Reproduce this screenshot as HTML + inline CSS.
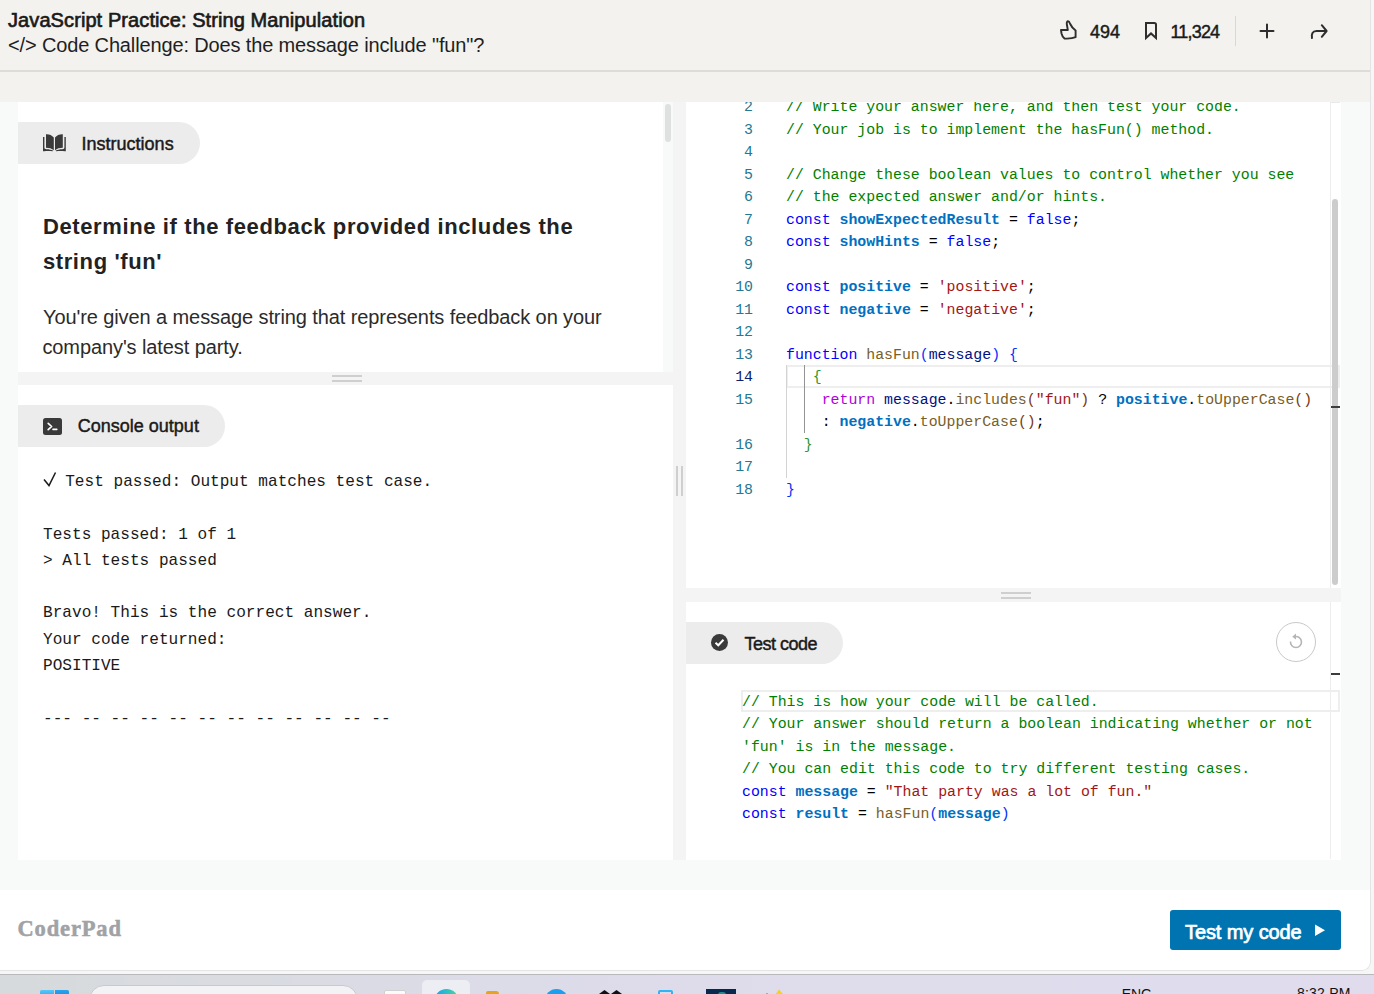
<!DOCTYPE html>
<html><head><meta charset="utf-8">
<style>
*{margin:0;padding:0;box-sizing:border-box}
html,body{width:1374px;height:994px;overflow:hidden;background:#f6f6f6;font-family:"Liberation Sans",sans-serif;color:#1a1a1a}
.a{position:absolute}
.t{position:absolute;white-space:pre;line-height:1}
.cm{color:#008000}.kw{color:#0000ff}.vr{color:#0070c1;font-weight:bold}.st{color:#a31515}.fn{color:#795e26}
.b1{color:#0431fa}.b2{color:#319331}.b3{color:#7b3814}.rt{color:#af00db}.pm{color:#001080}.op{color:#000}
</style></head><body>
<div class="a" style="left:0;top:0;width:1371px;height:971px;background:#f8f9f9;border-bottom-right-radius:9px;overflow:hidden">
<div class="a" style="left:0;top:0;width:1370px;height:102px;background:#f3f2ef"></div>
<div class="a" style="left:0;top:70px;width:1370px;height:2px;background:#dddcd8"></div>
<div class="t" style="left:8.00px;top:10.07px;font-size:20px;font-weight:normal;color:#1a1a1a;letter-spacing:0.09px;font-family:'Liberation Sans',sans-serif;-webkit-text-stroke:0.65px #1a1a1a;">JavaScript Practice: String Manipulation</div>
<div class="t" style="left:8.00px;top:34.87px;font-size:20px;font-weight:normal;color:#1f1f1f;letter-spacing:-0.14px;font-family:'Liberation Sans',sans-serif;">&lt;/&gt; Code Challenge: Does the message include "fun"?</div>
<svg class="a" style="left:1055px;top:16px" width="28" height="28" viewBox="0 0 28 28"><path d="M12.8 14 L11.8 8 C11.5 6 12.3 5.3 13 5.3 C14 5.3 14.5 6.2 15.2 8 C16.4 10.6 18.5 13 20.6 14.6 L20.6 21.2 C18 22.4 15 22.6 12 22.6 L9.6 22.6 C8 21.6 7 19.6 6.5 17.5 L6 14 Z" fill="none" stroke="#2e2e2e" stroke-width="1.9" stroke-linejoin="round"/></svg>
<div class="t" style="left:1090.00px;top:22.56px;font-size:18px;font-weight:normal;color:#1a1a1a;letter-spacing:0px;font-family:'Liberation Sans',sans-serif;-webkit-text-stroke:0.45px #1a1a1a;">494</div>
<svg class="a" style="left:1143px;top:21px" width="16" height="20" viewBox="0 0 16 20"><path d="M3 17 L3 2 L11.3 2 Q13 2 13 3.7 L13 17 L8 12.4 Z" fill="none" stroke="#2e2e2e" stroke-width="2" stroke-linejoin="miter" stroke-miterlimit="3"/></svg>
<div class="t" style="left:1170.40px;top:22.76px;font-size:18px;font-weight:normal;color:#1a1a1a;letter-spacing:-0.8px;font-family:'Liberation Sans',sans-serif;-webkit-text-stroke:0.45px #1a1a1a;">11,324</div>
<div class="a" style="left:1235px;top:16px;width:1px;height:30px;background:#d9d8d5"></div>
<svg class="a" style="left:1252px;top:16px" width="30" height="30" viewBox="0 0 30 30"><path d="M8.5 15 L21.5 15 M15 8.5 L15 21.5" stroke="#2e2e2e" stroke-width="2" stroke-linecap="round"/></svg>
<svg class="a" style="left:1300px;top:16px" width="36" height="30" viewBox="0 0 36 30"><path d="M12 22 C11.3 18 12.5 15 16.5 15 L26 15" fill="none" stroke="#2e2e2e" stroke-width="2" stroke-linecap="round"/><path d="M21.8 9.2 L26.6 15 L21.8 20.8" fill="none" stroke="#2e2e2e" stroke-width="2" stroke-linecap="round" stroke-linejoin="round"/></svg>
<div class="a" style="left:18px;top:102px;width:655px;height:758px;background:#fff"></div>
<div class="a" style="left:663px;top:102px;width:10px;height:270px;background:#f8f9f9"></div>
<div class="a" style="left:665px;top:104px;width:6px;height:38px;background:#dfe0e0;border-radius:3px"></div>
<div class="a" style="left:18px;top:122px;width:182px;height:42px;background:#ececec;border-radius:0 21px 21px 0"></div>
<svg class="a" style="left:38px;top:128px" width="34" height="28" viewBox="0 0 34 28"><g id="bk"><path d="M8 6.2 C11 6 14 7 15.8 9.6 L15.8 22.3 C14 20.6 11 19.8 8 19.8 Z" fill="#3a3a3a"/><path d="M5 9 L6.4 9 L6.4 19.6 C6.4 20.8 7 21.3 8.5 21.3 C11 21.3 13.5 21.8 15.2 22.8 L14.6 23.3 C11.5 22.7 8.5 22.8 6 23.3 L5 23.3 Z" fill="#3a3a3a"/></g><use href="#bk" transform="translate(32.8,0) scale(-1,1)"/></svg>
<div class="t" style="left:81.60px;top:134.76px;font-size:18px;font-weight:normal;color:#1a1a1a;letter-spacing:0px;font-family:'Liberation Sans',sans-serif;-webkit-text-stroke:0.45px #1a1a1a;">Instructions</div>
<div class="t" style="left:42.90px;top:215.88px;font-size:22px;font-weight:bold;color:#222222;letter-spacing:0.62px;font-family:'Liberation Sans',sans-serif;">Determine if the feedback provided includes the</div>
<div class="t" style="left:42.90px;top:250.88px;font-size:22px;font-weight:bold;color:#222222;letter-spacing:0.62px;font-family:'Liberation Sans',sans-serif;">string 'fun'</div>
<div class="t" style="left:43.00px;top:306.77px;font-size:20px;font-weight:normal;color:#2b2b2b;letter-spacing:-0.095px;font-family:'Liberation Sans',sans-serif;">You're given a message string that represents feedback on your</div>
<div class="t" style="left:42.40px;top:336.57px;font-size:20px;font-weight:normal;color:#2b2b2b;letter-spacing:-0.095px;font-family:'Liberation Sans',sans-serif;">company's latest party.</div>
<div class="a" style="left:18px;top:372px;width:655px;height:13px;background:#f4f4f4"></div>
<div class="a" style="left:332px;top:375px;width:30px;height:2px;background:#cfcfcf"></div>
<div class="a" style="left:332px;top:380px;width:30px;height:2px;background:#cfcfcf"></div>
<div class="a" style="left:18px;top:405px;width:207px;height:42px;background:#ececec;border-radius:0 21px 21px 0"></div>
<svg class="a" style="left:43px;top:418px" width="19" height="17" viewBox="0 0 19 17"><rect x="0" y="0" width="19" height="17" rx="2.5" fill="#3a3a3a"/><path d="M5.2 5.3 L8.6 8.5 L5.2 11.7" fill="none" stroke="#fff" stroke-width="1.7" stroke-linecap="round" stroke-linejoin="round"/><path d="M10 11.4 L13.8 11.4" stroke="#fff" stroke-width="1.6" stroke-linecap="round"/></svg>
<div class="t" style="left:77.80px;top:417.46px;font-size:18px;font-weight:normal;color:#1a1a1a;letter-spacing:0px;font-family:'Liberation Sans',sans-serif;-webkit-text-stroke:0.45px #1a1a1a;">Console output</div>
<svg class="a" style="left:42px;top:470px" width="16" height="18" viewBox="0 0 16 18"><path d="M2 9.5 L7 15.6 L13.5 2.5" fill="none" stroke="#1a1a1a" stroke-width="1.5"/></svg>
<div class="t" style="left:65.20px;top:473.86px;font-size:16.1px;font-weight:normal;color:#1a1a1a;letter-spacing:0px;font-family:'Liberation Mono',monospace;">Test passed: Output matches test case.</div>
<div class="t" style="left:43.00px;top:526.76px;font-size:16.1px;font-weight:normal;color:#1a1a1a;letter-spacing:0px;font-family:'Liberation Mono',monospace;">Tests passed: 1 of 1</div>
<div class="t" style="left:43.00px;top:553.16px;font-size:16.1px;font-weight:normal;color:#1a1a1a;letter-spacing:0px;font-family:'Liberation Mono',monospace;">&gt; All tests passed</div>
<div class="t" style="left:43.00px;top:604.96px;font-size:16.1px;font-weight:normal;color:#1a1a1a;letter-spacing:0px;font-family:'Liberation Mono',monospace;">Bravo! This is the correct answer.</div>
<div class="t" style="left:43.00px;top:631.86px;font-size:16.1px;font-weight:normal;color:#1a1a1a;letter-spacing:0px;font-family:'Liberation Mono',monospace;">Your code returned:</div>
<div class="t" style="left:43.00px;top:658.16px;font-size:16.1px;font-weight:normal;color:#1a1a1a;letter-spacing:0px;font-family:'Liberation Mono',monospace;">POSITIVE</div>
<div class="t" style="left:43.00px;top:710.66px;font-size:16.1px;font-weight:normal;color:#1a1a1a;letter-spacing:0px;font-family:'Liberation Mono',monospace;">--- -- -- -- -- -- -- -- -- -- -- --</div>
<div class="a" style="left:673px;top:102px;width:13px;height:758px;background:#f4f4f4"></div>
<div class="a" style="left:676px;top:466px;width:2px;height:30px;background:#cfcfcf"></div>
<div class="a" style="left:681px;top:466px;width:2px;height:30px;background:#cfcfcf"></div>
<div class="a" style="left:686px;top:102px;width:655px;height:758px;background:#fff"></div>
<div class="a" style="left:1330px;top:102px;width:1px;height:486px;background:#ededed"></div>
<div class="a" style="left:1330px;top:602px;width:1px;height:257px;background:#ededed"></div>
<div class="a" style="left:686px;top:102px;width:655px;height:486px;overflow:hidden">
<div class="a" style="left:100px;top:263px;width:554px;height:23px;border:2px solid #eeeeee"></div>
<div class="a" style="left:100px;top:263px;width:1px;height:113px;background:#d3d3d3"></div>
<div class="a" style="left:118px;top:263px;width:1px;height:68px;background:#939393"></div>
<div class="t" style="right:588.00px;top:-1.80px;font-size:14.87px;font-family:'Liberation Mono',monospace;color:#237893">2</div>
<div class="t" style="left:100px;top:-1.80px;font-size:14.87px;font-family:'Liberation Mono',monospace;color:#000"><span class="cm">// Write your answer here, and then test your code.</span></div>
<div class="t" style="right:588.00px;top:20.70px;font-size:14.87px;font-family:'Liberation Mono',monospace;color:#237893">3</div>
<div class="t" style="left:100px;top:20.70px;font-size:14.87px;font-family:'Liberation Mono',monospace;color:#000"><span class="cm">// Your job is to implement the hasFun() method.</span></div>
<div class="t" style="right:588.00px;top:43.20px;font-size:14.87px;font-family:'Liberation Mono',monospace;color:#237893">4</div>
<div class="t" style="right:588.00px;top:65.70px;font-size:14.87px;font-family:'Liberation Mono',monospace;color:#237893">5</div>
<div class="t" style="left:100px;top:65.70px;font-size:14.87px;font-family:'Liberation Mono',monospace;color:#000"><span class="cm">// Change these boolean values to control whether you see</span></div>
<div class="t" style="right:588.00px;top:88.20px;font-size:14.87px;font-family:'Liberation Mono',monospace;color:#237893">6</div>
<div class="t" style="left:100px;top:88.20px;font-size:14.87px;font-family:'Liberation Mono',monospace;color:#000"><span class="cm">// the expected answer and/or hints.</span></div>
<div class="t" style="right:588.00px;top:110.70px;font-size:14.87px;font-family:'Liberation Mono',monospace;color:#237893">7</div>
<div class="t" style="left:100px;top:110.70px;font-size:14.87px;font-family:'Liberation Mono',monospace;color:#000"><span class="kw">const</span> <span class="vr">showExpectedResult</span> = <span class="kw">false</span>;</div>
<div class="t" style="right:588.00px;top:133.20px;font-size:14.87px;font-family:'Liberation Mono',monospace;color:#237893">8</div>
<div class="t" style="left:100px;top:133.20px;font-size:14.87px;font-family:'Liberation Mono',monospace;color:#000"><span class="kw">const</span> <span class="vr">showHints</span> = <span class="kw">false</span>;</div>
<div class="t" style="right:588.00px;top:155.70px;font-size:14.87px;font-family:'Liberation Mono',monospace;color:#237893">9</div>
<div class="t" style="right:588.00px;top:178.20px;font-size:14.87px;font-family:'Liberation Mono',monospace;color:#237893">10</div>
<div class="t" style="left:100px;top:178.20px;font-size:14.87px;font-family:'Liberation Mono',monospace;color:#000"><span class="kw">const</span> <span class="vr">positive</span> = <span class="st">'positive'</span>;</div>
<div class="t" style="right:588.00px;top:200.70px;font-size:14.87px;font-family:'Liberation Mono',monospace;color:#237893">11</div>
<div class="t" style="left:100px;top:200.70px;font-size:14.87px;font-family:'Liberation Mono',monospace;color:#000"><span class="kw">const</span> <span class="vr">negative</span> = <span class="st">'negative'</span>;</div>
<div class="t" style="right:588.00px;top:223.20px;font-size:14.87px;font-family:'Liberation Mono',monospace;color:#237893">12</div>
<div class="t" style="right:588.00px;top:245.70px;font-size:14.87px;font-family:'Liberation Mono',monospace;color:#237893">13</div>
<div class="t" style="left:100px;top:245.70px;font-size:14.87px;font-family:'Liberation Mono',monospace;color:#000"><span class="kw">function</span> <span class="fn">hasFun</span><span class="b1">(</span><span class="pm">message</span><span class="b1">)</span> <span class="b1">{</span></div>
<div class="t" style="right:588.00px;top:268.20px;font-size:14.87px;font-family:'Liberation Mono',monospace;color:#0b216f">14</div>
<div class="t" style="left:100px;top:268.20px;font-size:14.87px;font-family:'Liberation Mono',monospace;color:#000">   <span class="b2">{</span></div>
<div class="t" style="right:588.00px;top:290.70px;font-size:14.87px;font-family:'Liberation Mono',monospace;color:#237893">15</div>
<div class="t" style="left:100px;top:290.70px;font-size:14.87px;font-family:'Liberation Mono',monospace;color:#000">    <span class="rt">return</span> <span class="pm">message</span>.<span class="fn">includes</span><span class="b3">(</span><span class="st">"fun"</span><span class="b3">)</span> ? <span class="vr">positive</span>.<span class="fn">toUpperCase</span><span class="b3">()</span></div>
<div class="t" style="left:100px;top:313.20px;font-size:14.87px;font-family:'Liberation Mono',monospace;color:#000">    : <span class="vr">negative</span>.<span class="fn">toUpperCase</span><span class="b3">()</span>;</div>
<div class="t" style="right:588.00px;top:335.70px;font-size:14.87px;font-family:'Liberation Mono',monospace;color:#237893">16</div>
<div class="t" style="left:100px;top:335.70px;font-size:14.87px;font-family:'Liberation Mono',monospace;color:#000">  <span class="b2">}</span></div>
<div class="t" style="right:588.00px;top:358.20px;font-size:14.87px;font-family:'Liberation Mono',monospace;color:#237893">17</div>
<div class="t" style="right:588.00px;top:380.70px;font-size:14.87px;font-family:'Liberation Mono',monospace;color:#237893">18</div>
<div class="t" style="left:100px;top:380.70px;font-size:14.87px;font-family:'Liberation Mono',monospace;color:#000"><span class="b1">}</span></div>
</div>
<div class="a" style="left:1331px;top:102px;width:9px;height:1px;background:#e9e9e9"></div>
<div class="a" style="left:1332px;top:199px;width:6px;height:386px;background:#cccccc;border-radius:3px"></div>
<div class="a" style="left:1331px;top:406px;width:9px;height:2px;background:#3c3c3c"></div>
<div class="a" style="left:686px;top:588px;width:655px;height:14px;background:#f4f4f4"></div>
<div class="a" style="left:1001px;top:592px;width:30px;height:2px;background:#cfcfcf"></div>
<div class="a" style="left:1001px;top:597px;width:30px;height:2px;background:#cfcfcf"></div>
<div class="a" style="left:686px;top:622px;width:157px;height:42px;background:#ececec;border-radius:0 21px 21px 0"></div>
<svg class="a" style="left:710px;top:633px" width="19" height="19" viewBox="0 0 19 19"><circle cx="9.5" cy="9.5" r="8.5" fill="#3a3a3a"/><path d="M5.5 9.8 L8.3 12.3 L13.5 6.8" fill="none" stroke="#fff" stroke-width="2"/></svg>
<div class="t" style="left:744.50px;top:634.76px;font-size:18px;font-weight:normal;color:#1a1a1a;letter-spacing:-0.5px;font-family:'Liberation Sans',sans-serif;-webkit-text-stroke:0.45px #1a1a1a;">Test code</div>
<div class="a" style="left:1276px;top:622px;width:40px;height:40px;border:1px solid #c9c9c9;border-radius:50%"></div>
<svg class="a" style="left:1286px;top:632px" width="20" height="20" viewBox="0 0 20 20"><path d="M4.5 9.5 A5.5 5.5 0 1 0 9 4.6" fill="none" stroke="#b5b5b5" stroke-width="1.6"/><path d="M10 1.5 L6.2 4.8 L10 7.5 Z" fill="#b5b5b5"/></svg>
<div class="a" style="left:1331px;top:673px;width:9px;height:2px;background:#3c3c3c"></div>
<div class="a" style="left:741px;top:690px;width:599px;height:22px;border:2px solid #eeeeee"></div>
<div class="t" style="left:742px;top:694.90px;font-size:14.87px;font-family:'Liberation Mono',monospace;color:#000"><span class="cm">// This is how your code will be called.</span></div>
<div class="t" style="left:742px;top:716.70px;font-size:14.87px;font-family:'Liberation Mono',monospace;color:#000"><span class="cm">// Your answer should return a boolean indicating whether or not</span></div>
<div class="t" style="left:742px;top:739.60px;font-size:14.87px;font-family:'Liberation Mono',monospace;color:#000"><span class="cm">'fun' is in the message.</span></div>
<div class="t" style="left:742px;top:761.70px;font-size:14.87px;font-family:'Liberation Mono',monospace;color:#000"><span class="cm">// You can edit this code to try different testing cases.</span></div>
<div class="t" style="left:742px;top:784.90px;font-size:14.87px;font-family:'Liberation Mono',monospace;color:#000"><span class="kw">const</span> <span class="vr">message</span> = <span class="st">"That party was a lot of fun."</span></div>
<div class="t" style="left:742px;top:806.80px;font-size:14.87px;font-family:'Liberation Mono',monospace;color:#000"><span class="kw">const</span> <span class="vr">result</span> = <span class="fn">hasFun</span><span class="b1">(</span><span class="vr">message</span><span class="b1">)</span></div>
<div class="a" style="left:0;top:890px;width:1370px;height:81px;background:#fff"></div>
<div class="t" style="left:17.50px;top:918.36px;font-size:22.5px;font-weight:bold;color:#a0a2a5;letter-spacing:0.85px;font-family:'Liberation Serif',serif;-webkit-text-stroke:0.5px #a0a2a5;">CoderPad</div>
<div class="a" style="left:1170px;top:910px;width:171px;height:40px;background:#0073b1;border-radius:3px"></div>
<div class="t" style="left:1185.00px;top:922.07px;font-size:20px;font-weight:normal;color:#ffffff;letter-spacing:-0.1px;font-family:'Liberation Sans',sans-serif;-webkit-text-stroke:0.7px #ffffff;">Test my code</div>
<svg class="a" style="left:1314px;top:924px" width="12" height="13" viewBox="0 0 12 13"><path d="M1 0.5 L11 6.3 L1 12 Z" fill="#fff"/></svg>
</div>
<div class="a" style="left:0;top:0;width:1371px;height:971px;border-right:1px solid #e4e4e4;border-bottom:1px solid #e4e4e4;border-bottom-right-radius:9px;pointer-events:none"></div>
<div class="a" style="left:0;top:974px;width:1374px;height:1px;background:#b8b8bd"></div>
<div class="a" style="left:0;top:975px;width:1374px;height:19px;background:linear-gradient(90deg,#d6dadc 0%,#d9dbe0 15%,#dcdbe8 35%,#dfdcec 60%,#e0dcee 100%)"></div>
<div class="a" style="left:40px;top:990px;width:13.6px;height:4px;background:linear-gradient(180deg,#56c8f9,#3fb5f3);border-radius:1.5px 0 0 0"></div>
<div class="a" style="left:55px;top:990px;width:13.9px;height:4px;background:linear-gradient(180deg,#2ba4ee,#1f97e6);border-radius:0 1.5px 0 0"></div>
<div class="a" style="left:89px;top:985px;width:269px;height:30px;background:#f3f3f5;border:1px solid #c9c9cf;border-radius:15px"></div>
<div class="a" style="left:384px;top:990px;width:21.5px;height:8px;background:#fbfbfb;border:1px solid #d0d0d0;border-radius:2px"></div>
<div class="a" style="left:422px;top:980px;width:48px;height:20px;background:#eceef4;border-radius:5px"></div>
<div class="a" style="left:434px;top:988.7px;width:25px;height:25px;border-radius:50%;background:linear-gradient(90deg,#1d9de6 0%,#2bc3c8 55%,#5fd37f 100%)"></div>
<div class="a" style="left:486px;top:991px;width:13px;height:5px;background:#e5a51a;border-radius:2px 3px 0 0"></div>
<div class="a" style="left:545px;top:988.7px;width:23px;height:23px;border-radius:50%;background:#1b9ff1"></div>
<svg class="a" style="left:598px;top:989px" width="26" height="6" viewBox="0 0 26 6"><path d="M1 5 L6.5 1 L12 5 Z M13 5 L18.5 1 L24 5 Z" fill="#111"/></svg>
<div class="a" style="left:658px;top:990px;width:15px;height:10px;border:2px solid #2db5f5;border-radius:2px"></div>
<div class="a" style="left:706px;top:988.8px;width:30px;height:10px;background:#07284f"></div>
<div class="a" style="left:718px;top:992px;width:8px;height:4px;background:#1f8d8d;border-radius:3px 3px 0 0"></div>
<div class="a" style="left:766px;top:992.5px;width:2px;height:2px;background:#e9a030"></div>
<svg class="a" style="left:774px;top:988.5px" width="11" height="6" viewBox="0 0 11 6"><path d="M1 6 L5 0.5 L10 6 Z" fill="#f7d21c"/></svg>
<div class="t" style="left:1121.80px;top:987.05px;font-size:14px;font-weight:normal;color:#111;letter-spacing:-0.1px;font-family:'Liberation Sans',sans-serif;">ENG</div>
<div class="t" style="left:1297.00px;top:985.85px;font-size:14px;font-weight:normal;color:#111;letter-spacing:0.2px;font-family:'Liberation Sans',sans-serif;">8:32 PM</div>
</body></html>
